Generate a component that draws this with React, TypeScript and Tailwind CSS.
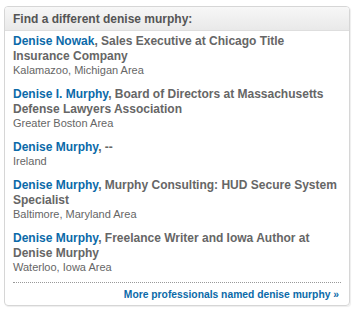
import React from "react";

const people = [
  { name: "Denise Nowak", title: "Sales Executive at Chicago Title Insurance Company", loc: "Kalamazoo, Michigan Area" },
  { name: "Denise I. Murphy", title: "Board of Directors at Massachusetts Defense Lawyers Association", loc: "Greater Boston Area" },
  { name: "Denise Murphy", title: "--", loc: "Ireland" },
  { name: "Denise Murphy", title: "Murphy Consulting: HUD Secure System Specialist", loc: "Baltimore, Maryland Area" },
  { name: "Denise Murphy", title: "Freelance Writer and Iowa Author at Denise Murphy", loc: "Waterloo, Iowa Area" },
];

export default function App() {
  return (
    <div className="bg-white w-[354px] h-[311px] pl-[4px] pt-[6px]" style={{ fontFamily: '"Liberation Sans", Arial, sans-serif' }}>
      <div className="w-[346px] border border-[#d6d6d6] rounded-[4px] shadow-[1px_1px_1px_rgba(0,0,0,0.07)] overflow-hidden">
        <div className="h-[24px] px-[8px] flex items-center border-b border-[#dedede] bg-gradient-to-b from-[#f7f7f7] to-[#e9e9e9] text-[12px] font-bold text-[#555]">
          Find a different denise murphy:
        </div>
        <div className="px-[8px] pt-[3px] pb-[3px]">
          {people.map((p, i) => (
            <div key={i} className={i < people.length - 1 ? "mb-[11px]" : ""}>
              <div className="text-[12px] leading-[15px] font-bold text-[#666] pr-[4px]">
                <span className="text-[#0b6aa9]">{p.name}</span>, {p.title}
              </div>
              <div className="text-[11px] leading-[12px] text-[#666]">{p.loc}</div>
            </div>
          ))}
          <div className="mt-[9px] border-t border-dotted border-[#999]" />
          <div className="pt-[4px] text-right text-[10.3px] leading-[15px] font-bold text-[#0b6aa9] pr-[2px]">
            More professionals named denise murphy »
          </div>
        </div>
      </div>
    </div>
  );
}
